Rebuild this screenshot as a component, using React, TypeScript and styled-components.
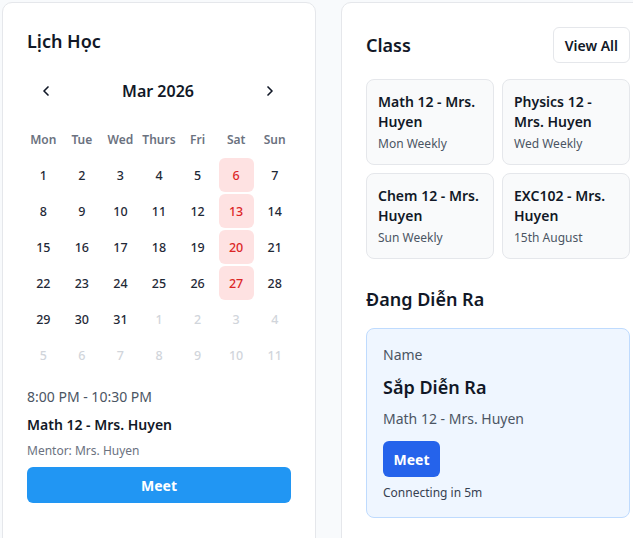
import React from "react";
import styled, { createGlobalStyle } from "styled-components";

const Global = createGlobalStyle`
  html, body { margin: 0; padding: 0; background: #f8fafc; overflow: hidden; }
  body { font-family: "Noto Sans", "Open Sans", sans-serif; color: #111827; }
  * { box-sizing: border-box; }
`;

const Page = styled.div`
  display: grid;
  grid-template-columns: 314px 314px;
  gap: 25px;
  padding: 2px 0 0 2px;
  width: 900px;
  min-height: 560px;
`;

const Card = styled.section`
  background: #ffffff;
  border: 1px solid #e5e7eb;
  border-radius: 10px;
  padding: 24px;
  display: flex;
  flex-direction: column;
`;

const Title = styled.h2`
  margin: 0;
  font-size: 18px;
  line-height: 28px;
  font-weight: 600;
  color: #111827;
`;

const Nav = styled.div`
  display: flex;
  align-items: center;
  justify-content: space-between;
  height: 36px;
  margin-top: 18px;
  padding-right: 2px;
`;

const NavBtn = styled.button`
  width: 38px;
  height: 36px;
  border: none;
  background: transparent;
  display: flex;
  align-items: center;
  justify-content: center;
  padding: 0;
  color: #111827;
`;

const Month = styled.div`
  font-size: 16px;
  font-weight: 600;
  color: #111827;
`;

const Grid = styled.div`
  display: grid;
  grid-template-columns: repeat(7, 1fr);
  grid-auto-rows: 36px;
  margin: 12px -3px 0 -3px;
`;

const WeekDay = styled.div`
  display: flex;
  align-items: center;
  justify-content: center;
  font-size: 12px;
  font-weight: 600;
  color: #6b7280;
`;

const DayCell = styled.div`
  display: flex;
  align-items: center;
  justify-content: center;
`;

const Day = styled.span<{ $muted?: boolean; $weekend?: boolean }>`
  width: 35px;
  height: 34px;
  border-radius: 6px;
  display: flex;
  align-items: center;
  justify-content: center;
  font-size: 12.5px;
  font-weight: 500;
  color: ${(p) => (p.$muted ? "#d1d5db" : p.$weekend ? "#dc2626" : "#1f2937")};
  background: ${(p) => (p.$weekend ? "#fee2e2" : "transparent")};
`;

const Time = styled.div`
  margin-top: 14px;
  font-size: 14px;
  line-height: 20px;
  color: #4b5563;
`;

const EventTitle = styled.div`
  margin-top: 8px;
  font-size: 14px;
  line-height: 20px;
  font-weight: 600;
  color: #111827;
`;

const Mentor = styled.div`
  margin-top: 8px;
  font-size: 12px;
  line-height: 16px;
  color: #6b7280;
`;

const MeetButton = styled.button<{ $block?: boolean }>`
  margin-top: ${(p) => (p.$block ? "8px" : "12px")};
  height: 36px;
  width: ${(p) => (p.$block ? "100%" : "57px")};
  border: none;
  border-radius: 6px;
  background: ${(p) => (p.$block ? "#2196f3" : "#2563eb")};
  color: #ffffff;
  font-family: inherit;
  font-size: 14px;
  font-weight: 700;
  padding: 0;
`;

const Header = styled.div`
  display: flex;
  align-items: center;
  justify-content: space-between;
  height: 36px;
`;

const GhostButton = styled.button`
  height: 36px;
  padding: 0 11px;
  background: #ffffff;
  border: 1px solid #e5e7eb;
  border-radius: 6px;
  font-family: inherit;
  font-size: 14px;
  font-weight: 600;
  color: #111827;
`;

const ClassGrid = styled.div`
  display: grid;
  grid-template-columns: 1fr 1fr;
  gap: 8px;
  margin-top: 16px;
`;

const ClassCard = styled.div`
  background: #f9fafb;
  border: 1px solid #e5e7eb;
  border-radius: 8px;
  padding: 12px 12px 12px 11px;
`;

const ClassName = styled.div`
  font-size: 14px;
  line-height: 20px;
  font-weight: 600;
  color: #111827;
`;

const ClassSub = styled.div`
  margin-top: 4px;
  font-size: 12px;
  line-height: 16px;
  color: #4b5563;
`;

const SectionTitle = styled(Title)`
  margin-top: 26px;
`;

const LiveCard = styled.div`
  margin-top: 15px;
  background: #eff6ff;
  border: 1px solid #bfdbfe;
  border-radius: 8px;
  padding: 16px;
  display: flex;
  flex-direction: column;
  align-items: flex-start;
`;

const Label = styled.div`
  font-size: 14px;
  line-height: 20px;
  color: #4b5563;
`;

const LiveTitle = styled.div`
  margin-top: 8px;
  font-size: 18px;
  line-height: 28px;
  font-weight: 600;
  color: #111827;
`;

const LiveSub = styled(Label)`
  margin-top: 8px;
`;

const Small = styled.div`
  margin-top: 8px;
  font-size: 12px;
  line-height: 16px;
  color: #374151;
`;

const Chevron = ({ dir }: { dir: "left" | "right" }) => (
  <svg width="16" height="16" viewBox="0 0 24 24" fill="none" stroke="currentColor" strokeWidth="2.5" strokeLinecap="round" strokeLinejoin="round">
    {dir === "left" ? <path d="M15 18l-6-6 6-6" /> : <path d="M9 18l6-6-6-6" />}
  </svg>
);

const weekdays = ["Mon", "Tue", "Wed", "Thurs", "Fri", "Sat", "Sun"];

const days: { n: number; muted: boolean }[] = [];
for (let i = 1; i <= 31; i++) days.push({ n: i, muted: false });
for (let i = 1; i <= 11; i++) days.push({ n: i, muted: true });

const classes = [
  { name: "Math 12 - Mrs. Huyen", sub: "Mon Weekly" },
  { name: "Physics 12 - Mrs. Huyen", sub: "Wed Weekly" },
  { name: "Chem 12 - Mrs. Huyen", sub: "Sun Weekly" },
  { name: "EXC102 - Mrs. Huyen", sub: "15th August" },
];

export default function App() {
  return (
    <>
      <Global />
      <Page>
        <Card>
          <Title>Lịch Học</Title>
          <Nav>
            <NavBtn aria-label="previous"><Chevron dir="left" /></NavBtn>
            <Month>Mar 2026</Month>
            <NavBtn aria-label="next"><Chevron dir="right" /></NavBtn>
          </Nav>
          <Grid>
            {weekdays.map((w) => (
              <WeekDay key={w}>{w}</WeekDay>
            ))}
            {days.map((d, i) => (
              <DayCell key={i}>
                <Day $muted={d.muted} $weekend={!d.muted && i % 7 === 5}>{d.n}</Day>
              </DayCell>
            ))}
          </Grid>
          <Time>8:00 PM - 10:30 PM</Time>
          <EventTitle>Math 12 - Mrs. Huyen</EventTitle>
          <Mentor>Mentor: Mrs. Huyen</Mentor>
          <MeetButton $block>Meet</MeetButton>
        </Card>
        <Card>
          <Header>
            <Title>Class</Title>
            <GhostButton>View All</GhostButton>
          </Header>
          <ClassGrid>
            {classes.map((c) => (
              <ClassCard key={c.name}>
                <ClassName>{c.name}</ClassName>
                <ClassSub>{c.sub}</ClassSub>
              </ClassCard>
            ))}
          </ClassGrid>
          <SectionTitle>Đang Diễn Ra</SectionTitle>
          <LiveCard>
            <Label>Name</Label>
            <LiveTitle>Sắp Diễn Ra</LiveTitle>
            <LiveSub>Math 12 - Mrs. Huyen</LiveSub>
            <MeetButton>Meet</MeetButton>
            <Small>Connecting in 5m</Small>
          </LiveCard>
        </Card>
      </Page>
    </>
  );
}
